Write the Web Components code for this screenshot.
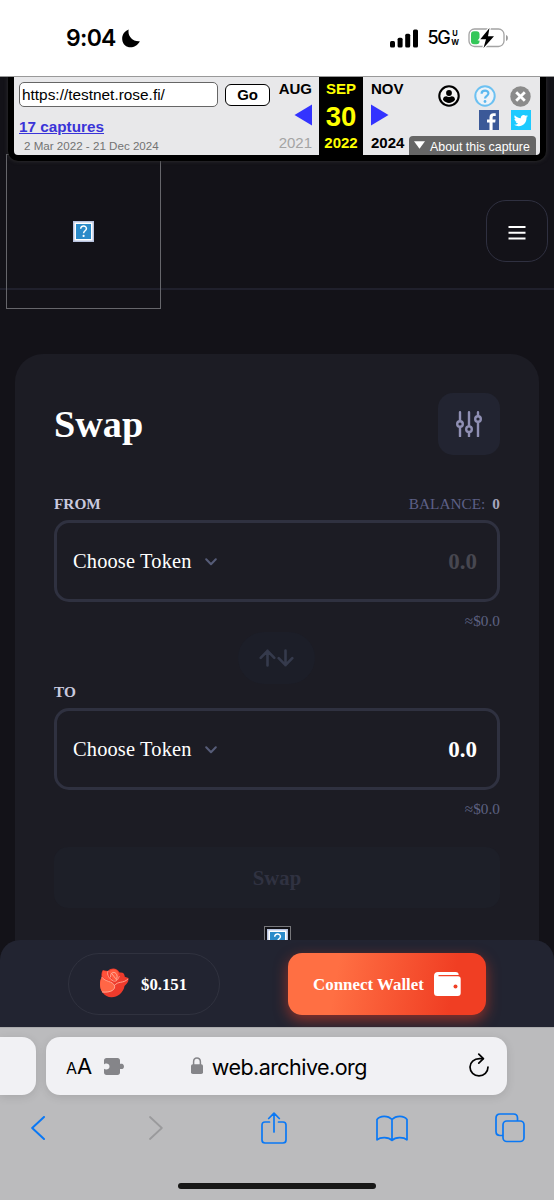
<!DOCTYPE html>
<html lang="en">
<head>
<meta charset="utf-8">
<title>Swap</title>
<style>
html,body{margin:0;padding:0}
body{width:554px;height:1200px;overflow:hidden;background:#131218;display:flex;flex-direction:column}
</style>
</head>
<body>
<status-bar></status-bar>
<dapp-page>
  <wayback-bar slot="top"></wayback-bar>
  <site-header slot="top"></site-header>
  <swap-card></swap-card>
  <wallet-bar slot="bottom"></wallet-bar>
</dapp-page>
<browser-controls></browser-controls>
<script>
const ICONS = {
  moon: ['0 0 18 19', '<path fill="#000" d="M6.700.4C5.300 6.700 10.300 13 17.800 12.200 13.800 20.600 1 20.500.2 10.200-.1 5.800 2.500 1.900 6.700.4z"/>'],
  signal: ['0 0 28 19', '<g fill="#000"><rect x="0" y="12" width="5" height="6.500" rx="1.500"/><rect x="7.600" y="8.700" width="5" height="9.800" rx="1.500"/><rect x="15.200" y="4.700" width="5" height="13.800" rx="1.500"/><rect x="23" y=".5" width="5" height="18" rx="1.500"/></g>'],
  battery: ['0 0 41 22', '<rect x="1" y="2" width="35" height="17.500" rx="5.500" fill="#fff" stroke="#a3a3a3" stroke-width="1.300"/><path d="M38 8v6c2.500-.6 2.500-5.400 0-6z" fill="#999"/><rect x="3" y="4.200" width="8.500" height="13" rx="3" fill="#34c759"/><path d="M21.500 1 12.300 12.200h5.700L15.500 21 26 9.200h-6z" fill="#000" stroke="#fff" stroke-width="2.600" paint-order="stroke"/>'],
  left: ['0 0 18 22', '<path fill="#3333ff" d="M18 .5v21L.5 11z"/>'],
  right: ['0 0 18 22', '<path fill="#3333ff" d="M0 .5v21L17.500 11z"/>'],
  user: ['0 0 22 22', '<circle cx="11" cy="11" r="9.700" fill="#f4f4f4" stroke="#000" stroke-width="2.100"/><circle cx="11" cy="8" r="2.900"/><path d="M5 14.800c0-2.500 1.500-3.600 3.400-3.600 1.300 1 3.900 1 5.200 0 1.900 0 3.400 1.100 3.400 3.600-3 4.200-9 4.200-12 0z"/>'],
  help: ['0 0 22 22', '<circle cx="11" cy="11" r="9.700" fill="#eef3f8" stroke="#6cc1f2" stroke-width="2"/><path d="M7.600 8.700c0-4.200 7-4 6.800-.2-.1 2.300-3.400 2.400-3.400 5" fill="none" stroke="#5db8ef" stroke-width="2.200"/><circle cx="11" cy="16.500" r="1.400" fill="#5db8ef"/>'],
  close: ['0 0 21 21', '<circle cx="10.500" cy="10.500" r="10.200" fill="#8b8b8b"/><path d="m6.200 6.200 8.600 8.600m0-8.600-8.600 8.600" stroke="#fff" stroke-width="2.800"/>'],
  facebook: ['0 0 20 20', '<path fill="#3b5998" d="M0 0h20v20H0z"/><path fill="#fff" d="M10.500 20v-7.500H8V9.600h2.500V7.300c0-2.700 1.600-4 4-4h2.200v2.800h-1.500c-1.300 0-1.600.6-1.600 1.600v1.900h3l-.4 2.900h-2.600V20z"/>'],
  twitter: ['0 0 20 20', '<path fill="#1dcaff" d="M0 0h20v20H0z"/><path fill="#fff" d="M17 6.200c-.5.3-1.100.4-1.700.5.600-.4 1.100-1 1.300-1.600-.6.300-1.200.6-1.900.7-1.900-2-5.300-.5-4.900 2.400C7.400 8.100 5.200 6.900 3.800 5.200c-.8 1.300-.4 3 .9 3.900-.5 0-.9-.1-1.300-.4 0 1.400 1 2.600 2.400 2.900-.5.100-.9.100-1.300 0 .4 1.200 1.400 2 2.700 2-1.200 1-2.700 1.400-4.200 1.200 6 3.600 12.900-.3 12.500-7.200.6-.3 1.100-.8 1.500-1.400z"/>'],
  down: ['0 0 12 8', '<path fill="#fff" d="M0 0h12L6 8z"/>'],
  missing: ['0 0 21 21', '<path fill="#b8c3df" d="M0 0h21v21H0z"/><path fill="#fff" d="M1.500 1.500h18v18h-18z"/><path fill="#2b8bc9" d="M3 3h15v15H3z"/><path d="M7.700 7.800c0-3.800 5.900-3.600 5.700-.1-.1 2-2.800 2.100-2.800 4.500" fill="none" stroke="#fff" stroke-width="1.500"/><circle cx="10.600" cy="14.900" r="1.100" fill="#fff"/>'],
  menu: ['0 0 18 14', '<path d="M.5 1h17M.5 6.800h17M.5 12.400h17" stroke="#fff" stroke-width="2"/>'],
  sliders: ['0 0 26 26', '<g stroke="#8f8fb3" stroke-width="2.400" stroke-linecap="round"><path d="M4 1.200v24M13 1.200v24M22 1.200v24"/><g fill="#222431"><circle cx="4" cy="13" r="2.800"/><circle cx="13" cy="18.200" r="2.800"/><circle cx="22" cy="8" r="2.800"/></g></g>'],
  chevron: ['0 0 12 8', '<path d="m1.200 1.200 4.800 5 4.800-5" fill="none" stroke="#565c78" stroke-width="2" stroke-linecap="round" stroke-linejoin="round"/>'],
  arrows: ['0 0 35 18', '<g fill="none" stroke="#353a4c" stroke-width="2.600" stroke-linecap="round" stroke-linejoin="round"><path d="M8.500 16.500V1.800m-6.800 7 6.800-7 6.800 7M26.500 1.500v14.700m-6.800-7 6.800 7 6.800-7"/></g>'],
  rose: ['0 0 30 30', '<path fill="#ee3b2c" d="M3.700 2.200 9 3C12-.4 18-.4 20.500 4.500c3.500-.5 5 .8 5.300 4.200l3.600 1.400c.7 3.500-1.600 5.900-3.900 8C24.500 25 18 29.500 12.500 29.300 5 28.800.8 22.500 1 15.500c.1-3 .6-4.500 1.700-6.300C2.200 6.700 2.400 4.300 3.700 2.200z"/><path fill="#ff6646" d="M2.800 9.200c3.600 5 10.500 3.600 12.600 8.200 1.600 4-3 8-12 6.800C.6 20.500.3 13.500 2.800 9.200z"/><path fill="#ff5139" d="M4 2.500 8.700 3.800 8.400 8l5.400 4.400-1.600 1C8 11.500 4.500 11 3 7.800z"/><path fill="#ff5a3e" d="M10 3.500c3.500-3.300 9-2.500 9.800 2.500l-2 6.800-4.300-1z"/><path d="M2.800 9.200c3.600 5 10.500 3.600 12.600 8.200 1.600 4-3.500 7.500-12 6.600M15.500 17.500c3.500-5 8.500-1.500 13.300-6.300M9 3.200C7.500 7 10 10.500 14.500 13c3 .8 4.300-1.200 5.700-4.500M11.500 9c-.5-4 3-6 5.500-3.500 1.400 1.500 1.500 4 .3 6.200M12.500 5.200l4 5.300" fill="none" stroke="#ffad98" stroke-width=".9" stroke-linecap="round"/>'],
  wallet: ['0 0 27 24', '<path fill="#fff" d="M4 0h17.500C23.800 0 24.700 1.200 24.700 3H4.500v1.300H24c1.800 0 2.700.9 2.700 2.700v14c0 2-1 3-3 3H3.500C1 24 0 23 0 20.500V4C0 1.500 1.500 0 4 0z"/><circle cx="21.500" cy="14.500" r="2" fill="#ef3f25"/>'],
  puzzle: ['0 0 20 17', '<path fill="#858589" d="M2.500 0h11c1.500 0 2.500 1 2.500 2.500v3.400c.7-.4 4-.6 4 2.500s-3.300 2.900-4 2.500v3.600c0 1.500-1 2.500-2.500 2.500h-11C1 17 0 16 0 14.500v-3.800c1.200 1.400 5.500 1.300 5.500-2.200S1.200 5.100 0 6.500v-4C0 1 1 0 2.500 0z"/>'],
  lock: ['0 0 12 17', '<path d="M2.600 8V4.800c0-5.200 6.800-5.200 6.800 0V8" fill="none" stroke="#858589" stroke-width="1.500"/><rect y="7.300" width="12" height="9.700" rx="1.800" fill="#858589"/>'],
  reload: ['0 0 20 24', '<path d="M13.800 5.700H10.500C5 5.700 1 9.500 1 14c0 5 4 8.800 9 8.800s9-3.800 9-8.800" fill="none" stroke="#000" stroke-width="1.700" stroke-linecap="round"/><path d="m9.800 1.200 4.600 4.500-4.600 4.500" fill="none" stroke="#000" stroke-width="1.700" stroke-linecap="round" stroke-linejoin="round"/>'],
  back: ['0 0 14 24', '<path d="M13 1 1.200 12 13 23" fill="none" stroke="#0a78f5" stroke-width="2" stroke-linecap="round" stroke-linejoin="round"/>'],
  forward: ['0 0 14 24', '<path d="m1 1 11.800 11L1 23" fill="none" stroke="#9a9a9c" stroke-width="1.800" stroke-linecap="round" stroke-linejoin="round"/>'],
  share: ['0 0 26 32', '<path d="M8.500 10H4c-2 0-3 1-3 3v15c0 2 1 3 3 3h18c2 0 3-1 3-3V13c0-2-1-3-3-3h-4.500M13 20V1.500M7.700 6.500 13 1.200l5.300 5.300" fill="none" stroke="#0a78f5" stroke-width="1.700" stroke-linecap="round" stroke-linejoin="round"/>'],
  book: ['0 0 32 27', '<path d="M16 4.500C12 .2 4 .2 1 4.500v20.300c3.500-3 11.500-3 15 .5 3.500-3.500 11.500-3.500 15-.5V4.500c-3-4.300-11-4.300-15 0zM16 4.500v20.500" fill="none" stroke="#0a78f5" stroke-width="1.700" stroke-linejoin="round"/>'],
  tabs: ['0 0 30 30', '<path d="M8 22.500H5c-2.500 0-4-1.500-4-4V5c0-2.500 1.500-4 4-4h13.500c2.500 0 4 1.500 4 4v3" fill="none" stroke="#0a78f5" stroke-width="1.700"/><rect x="8" y="8" width="21" height="20.500" rx="3.800" fill="none" stroke="#0a78f5" stroke-width="1.700"/>']
};

function define(tag, markup) {
  const template = document.createElement('template');
  template.innerHTML = markup;
  customElements.define(tag, class extends HTMLElement {
    constructor() {
      super();
      this.attachShadow({ mode: 'open' }).append(template.content.cloneNode(true));
    }
  });
}

customElements.define('ui-icon', class extends HTMLElement {
  connectedCallback() {
    if (this.shadowRoot) return;
    const [box, body] = ICONS[this.getAttribute('name')];
    const [, , w, h] = box.split(' ');
    this.attachShadow({ mode: 'open' }).innerHTML =
      `<style>:host{display:block;flex:none;width:${w}px;height:${h}px}svg{display:block;width:100%;height:100%}</style><svg viewBox="${box}" aria-hidden="true">${body}</svg>`;
  }
});

define('status-bar', `<style>
:host{display:flex;box-sizing:border-box;height:77px;flex:none;background:#fff;border-bottom:1px solid #999;padding:0 45px 0 66px;align-items:center;justify-content:space-between;font-family:Inter,sans-serif;color:#000}
div{display:flex;align-items:center}
.time{font-size:23px;font-weight:600;line-height:28px;letter-spacing:-.7px}
.left ui-icon{margin-left:6px}
.net{font-size:18px;font-weight:500;line-height:24px;letter-spacing:-1.500px;margin-left:10px}
.uw{flex-direction:column;font-size:7.500px;font-weight:700;line-height:10px;margin:0 9px 0 2px}
.uw span{height:9px;line-height:9px}
</style><div class="left"><span class="time">9:04</span><ui-icon name="moon"></ui-icon></div>
<div class="right"><ui-icon name="signal"></ui-icon><span class="net">5G</span><div class="uw"><span>U</span><span>W</span></div><ui-icon name="battery"></ui-icon></div>`);

define('dapp-page', `<style>
:host{display:block;position:relative;height:950px;flex:none;overflow:hidden;background:#131218}
main{padding:64px 15px 0}
.bottom{position:absolute;left:0;right:0;bottom:0}
</style><slot name="top"></slot><main><slot></slot></main><div class="bottom"><slot name="bottom"></slot></div>`);

define('wayback-bar', `<style>
:host{display:flex;position:relative;z-index:2;box-sizing:border-box;height:84px;margin:0 8px;border:6px solid #000;border-top:0;border-radius:0 0 10px 10px;background:#e8e8ea;font-family:"Liberation Sans",Arial,sans-serif;color:#000;box-shadow:0 0 4px #333}
.url{box-sizing:border-box;width:256px;flex:none;padding:5px 0 0 5px}
.form{display:flex;align-items:center;gap:7px;height:25px}
.input{box-sizing:border-box;width:200px;height:25px;border:1px solid #666;border-radius:5px;background:#fff;padding-left:2px;font-size:15.400px;line-height:24px}
.go{box-sizing:border-box;width:45px;height:22px;border:1.500px solid #000;border-radius:6px;background:#fff;text-align:center;font-weight:bold;font-size:15px;line-height:20px}
.captures{display:block;width:max-content;margin-top:11px;font-weight:bold;font-size:15.300px;line-height:18px;color:#3a34d8;text-decoration:underline}
.range{font-size:11.600px;line-height:15px;margin:2px 0 0 5px;color:#737373}
.col{box-sizing:border-box;width:49px;flex:none;display:flex;flex-direction:column;align-items:center;font-weight:bold;font-size:15px;line-height:18px;padding-top:3px;height:78px}
.prev{align-items:flex-end;padding-right:7px}
.next{align-items:flex-start;padding-left:8px}
.col ui-icon{margin:6px 0 8px}
.col .old{color:#a4a4a4;font-weight:normal}
.col.now{width:44px;margin-left:49px;margin-left:0;padding:0;background:#000;color:#ff0}
.now span{line-height:18px;margin-top:3px}.now b{font-size:27.500px;line-height:30px;margin-top:4px}.now .y{margin-top:2px}
.tools{flex:1;min-width:0;display:flex;flex-direction:column;align-items:flex-end;padding-top:8px}
.icons{display:flex;align-items:center;gap:14px;padding-right:9px;height:23px}
.social{display:flex;gap:12px;padding:3px 9px 0 0}
.about{box-sizing:border-box;display:flex;align-items:center;gap:5px;width:127px;height:19px;margin:6px 4px 0 0;padding:3px 0 0 5px;background:#666;border-radius:4px 4px 0 0;color:#fff;font-size:12.400px;line-height:16px;white-space:nowrap}
.about ui-icon{margin-top:-5px;width:11px}
</style>
<div class="url"><div class="form"><div class="input">https://testnet.rose.fi/</div><div class="go">Go</div></div><span class="captures">17 captures</span><div class="range">2 Mar 2022 - 21 Dec 2024</div></div>
<div class="col prev"><span>AUG</span><ui-icon name="left"></ui-icon><span class="old">2021</span></div>
<div class="col now"><span>SEP</span><b>30</b><span class="y">2022</span></div>
<div class="col next"><span>NOV</span><ui-icon name="right"></ui-icon><span>2024</span></div>
<div class="tools"><div class="icons"><ui-icon name="user"></ui-icon><ui-icon name="help"></ui-icon><ui-icon name="close"></ui-icon></div><div class="social"><ui-icon name="facebook"></ui-icon><ui-icon name="twitter"></ui-icon></div><div class="about"><ui-icon name="down"></ui-icon>About this capture</div></div>`);

define('site-header', `<style>
:host{display:flex;box-sizing:border-box;height:129px;border-bottom:2px solid #20202c;justify-content:space-between;padding:0 6px}
.logo{box-sizing:border-box;width:155px;height:155px;margin-top:-7px;border:1px solid #66666b;display:flex;align-items:center;justify-content:center}
.menu{box-sizing:border-box;width:62px;height:62px;margin-top:39px;border:1.500px solid #2f3040;border-radius:20px;display:flex;align-items:center;justify-content:center;padding-top:3px}
</style><div class="logo"><ui-icon name="missing"></ui-icon></div><div class="menu"><ui-icon name="menu"></ui-icon></div>`);

define('token-field', `<style>
:host{display:block;height:137px;font-family:"Liberation Serif","Times New Roman",serif}
.labels{display:flex;justify-content:space-between;height:20px;line-height:20px;font-size:15.300px;color:#c9c9de;font-weight:bold}
.box{box-sizing:border-box;height:82px;margin-top:6px;border:3px solid #2f3140;border-radius:15px;display:flex;align-items:center;padding:1px 20px 0 16px;color:#fff}
.token{font-size:20.400px;letter-spacing:.17px}
ui-icon{margin-left:13px}
.amount{margin-left:auto;font-size:23px;font-weight:bold;color:var(--amount,#fff)}
.usd{height:20px;line-height:20px;margin-top:9px;text-align:right;font-size:15.300px;color:#5d6282}
</style><div class="labels"><slot name="label"></slot><slot name="balance"></slot></div><div class="box"><span class="token">Choose Token</span><ui-icon name="chevron"></ui-icon><span class="amount">0.0</span></div><div class="usd">≈$0.0</div>`);

define('swap-card', `<style>
:host{display:flex;flex-direction:column;box-sizing:border-box;height:640px;padding:39px 39px 0;background:#1c1c24;border-radius:28px;font-family:"Liberation Serif","Times New Roman",serif}
.head{display:flex;justify-content:space-between;align-items:center;height:61px;margin-bottom:40px}
h1{margin:0;font-size:38.200px;line-height:44px;color:#fff}
.settings{width:62px;height:62px;border-radius:15px;background:#222431;display:flex;align-items:center;justify-content:center}
.balance{font-weight:normal;color:#5d6087;white-space:pre}.balance b{color:#a5a5bd;margin-left:7px}
.flip{align-self:center;width:77px;height:52px;margin:1px 0 -2px -1px;border-radius:26px;background:#1c1e28;display:flex;align-items:center;justify-content:center}
.from{--amount:#474750}
.action{height:61px;margin-top:28px;border-radius:14px;background:#1d1f28;text-align:center;font-weight:bold;font-size:20.700px;line-height:62px;color:#303241}
.pic{box-sizing:border-box;align-self:center;width:27px;height:27px;margin-top:18px;border:1px solid #77777b;padding:2px;background:#111116}
</style>
<div class="head"><h1>Swap</h1><div class="settings"><ui-icon name="sliders"></ui-icon></div></div>
<token-field class="from"><span slot="label">FROM</span><span class="balance" slot="balance">BALANCE:<b>0</b></span></token-field>
<div class="flip"><ui-icon name="arrows"></ui-icon></div>
<token-field><span slot="label">TO</span></token-field>
<div class="action">Swap</div><div class="pic"><ui-icon name="missing"></ui-icon></div>`);

define('wallet-bar', `<style>
:host{display:flex;box-sizing:border-box;height:87px;padding:13px 68px 0;justify-content:space-between;background:#222431;border-radius:20px 20px 0 0;font-family:"Liberation Serif","Times New Roman",serif;font-weight:bold;color:#fff}
.price{box-sizing:border-box;width:152px;height:62px;border:1.500px solid #30323f;border-radius:31px;display:flex;align-items:center;padding-left:30px;gap:12px;font-size:16.800px}
.price ui-icon{margin-top:-2px}
.price span,.connect span{padding-top:1px}
.connect{box-sizing:border-box;width:198px;height:62px;border-radius:14px;background:linear-gradient(100deg,#ff6f43 25%,#f03e23 82%);box-shadow:0 5px 14px #f03e2388;display:flex;align-items:center;justify-content:center;gap:10px;font-size:16.900px;white-space:nowrap}
</style><div class="price"><ui-icon name="rose"></ui-icon><span>$0.151</span></div><div class="connect"><span>Connect Wallet</span><ui-icon name="wallet"></ui-icon></div>`);

define('browser-controls', `<style>
:host{display:block;box-sizing:border-box;height:173px;flex:none;background:#bbbbbd;border-top:1px solid #aaaaac;overflow:hidden;font-family:Inter,sans-serif;color:#000}
.tabs{display:flex;gap:10px;padding-top:9px}
.prev,.address{height:58px;background:#f1f1f4;box-shadow:0 2px 10px #0000001c}
.prev{width:36px;border-radius:0 14px 14px 0}
.address{box-sizing:border-box;width:461px;border-radius:14px;display:flex;align-items:center;padding:0 18px 0 20px}
.small{font-size:16px;padding-top:4px}.big{font-size:22px;letter-spacing:-.5px}
.address ui-icon[name=puzzle]{margin-left:12px}
.address ui-icon[name=lock]{margin-left:67px;margin-top:-2px}
.host{font-size:21.500px;letter-spacing:-.55px;margin-left:9px;padding-top:1px}
.address ui-icon[name=reload]{margin-left:auto;margin-top:-3px}
.nav{display:grid;grid-template-columns:repeat(5,118px);align-items:center;justify-items:center;height:34px;margin:16px 0 0 -21px}
.home{width:198px;height:6px;margin:38px auto 0;border-radius:3px;background:#171717}
</style><div class="tabs"><div class="prev"></div><div class="address"><span class="small">A</span><span class="big">A</span><ui-icon name="puzzle"></ui-icon><ui-icon name="lock"></ui-icon><span class="host">web.archive.org</span><ui-icon name="reload"></ui-icon></div></div>
<div class="nav"><ui-icon name="back"></ui-icon><ui-icon name="forward"></ui-icon><ui-icon name="share"></ui-icon><ui-icon name="book"></ui-icon><ui-icon name="tabs"></ui-icon></div>
<div class="home"></div>`);
</script>
</body>
</html>
